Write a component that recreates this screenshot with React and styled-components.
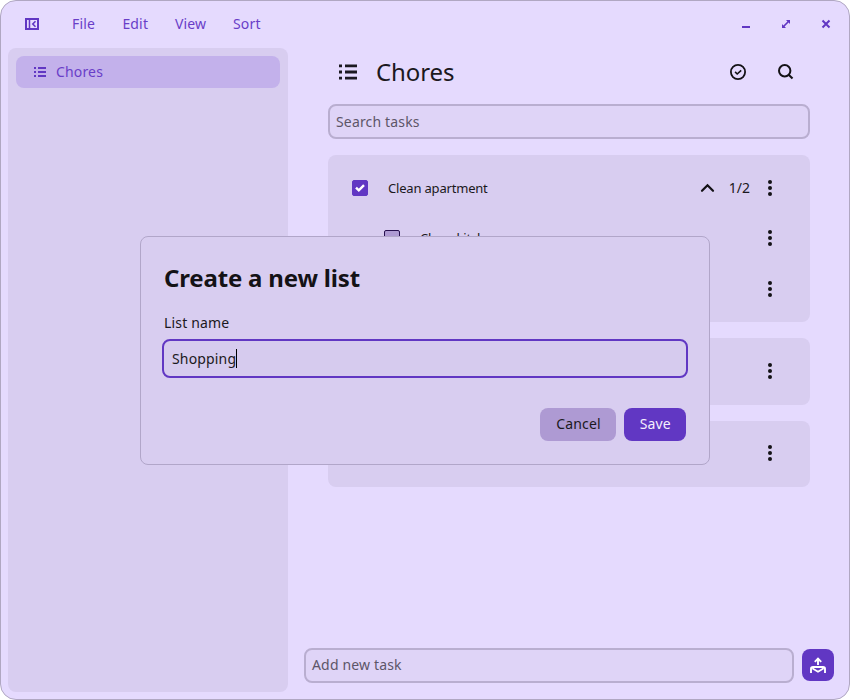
import React from "react";
import styled, { createGlobalStyle } from "styled-components";

const c = {
  bg: "#e5dafe",
  panel: "#d8cdf0",
  field: "#dfd4f7",
  fieldBorder: "#b9aed0",
  active: "#c3b1eb",
  accent: "#6137c3",
  accentText: "#693ec8",
  text: "#1b1820",
  muted: "#5d5668",
  strong: "#141216",
};

const GlobalStyle = createGlobalStyle`
  * { box-sizing: border-box; }
  body { margin: 0; background: #fff; }
  button { font: inherit; letter-spacing: inherit; border: 0; padding: 0; background: none; color: inherit; }
`;

const Window = styled.div`
  position: relative;
  width: 850px;
  height: 700px;
  display: flex;
  flex-direction: column;
  border: 1px solid #b0a7c2;
  border-radius: 16px;
  background: ${c.bg};
  color: ${c.text};
  font-family: "Noto Sans", "Open Sans", sans-serif;
  font-size: 14px;
  line-height: 20px;
  letter-spacing: 0.16px;
  overflow: hidden;
`;

const TitleBar = styled.header`
  height: 47px;
  flex: none;
  display: flex;
  align-items: center;
  padding: 0 11px 1px 23px;
  color: ${c.accentText};
`;

const Menu = styled.nav`
  display: flex;
  flex: 1;
  gap: 27px;
  margin-left: 32px;
`;

const MenuItem = styled.button`
  width: ${(p) => p.$w}px;
  text-align: left;
  white-space: nowrap;
`;

const WindowControls = styled.div`
  display: flex;
  gap: 16px;
`;

const IconButton = styled.button`
  width: ${(p) => p.$size || 24}px;
  height: ${(p) => p.$size || 24}px;
  display: grid;
  place-items: center;
  svg { display: block; }
`;

const Body = styled.div`
  flex: 1;
  min-height: 0;
  display: flex;
  padding: 0 7px 7px;
`;

const Sidebar = styled.aside`
  width: 280px;
  flex: none;
  padding: 8px;
  border-radius: 8px;
  background: ${c.panel};
`;

const SidebarItem = styled.div`
  height: 32px;
  display: flex;
  align-items: center;
  gap: 8px;
  padding: 0 16px;
  border-radius: 8px;
  background: ${c.active};
  color: ${c.accentText};
  svg { display: block; }
`;

const Main = styled.main`
  flex: 1;
  display: flex;
  flex-direction: column;
  padding: 8px 8px 9.5px 16px;
`;

const Content = styled.div`
  flex: 1;
  padding: 0 24px;
`;

const Heading = styled.div`
  height: 32px;
  display: flex;
  align-items: center;
  padding: 0 12px 0 8px;
`;

const ListTitle = styled.h1`
  flex: 1;
  margin: 0 0 0 16px;
  font-size: 24px;
  line-height: 32px;
  font-weight: 400;
  letter-spacing: -0.1px;
`;

const HeadingActions = styled.div`
  display: flex;
  gap: 24px;
  color: ${c.strong};
`;

const Field = styled.div`
  display: flex;
  align-items: center;
  height: 35px;
  padding: 0 6px;
  border: 2px solid ${c.fieldBorder};
  border-radius: 8px;
  background: ${c.field};
  color: ${c.muted};
`;

const SearchField = styled(Field)`
  margin-top: 16.4px;
`;

const Card = styled.section`
  margin-top: 16px;
  padding: 8px 32px 8px 24px;
  border-radius: 8px;
  background: ${c.panel};
`;

const TaskRow = styled.div`
  height: 50.33px;
  display: flex;
  align-items: center;
  padding-left: ${(p) => (p.$nested ? 32 : 0)}px;
  padding-bottom: 1px;
`;

const CheckMark = styled.span`
  width: 16px;
  height: 16px;
  display: grid;
  place-items: center;
  border-radius: 2px;
  border: 1px solid ${(p) => (p.$checked ? c.accent : "#27104f")};
  background: ${(p) => (p.$checked ? c.accent : "#ae9ad3")};
  color: #fff;
`;

const TaskName = styled.span`
  flex: 1;
  margin-left: 20px;
  font-size: 13px;
  letter-spacing: -0.19px;
`;

const Count = styled.span`
  margin: 0 12px 0 13px;
  letter-spacing: 0;
`;

const Composer = styled.div`
  display: flex;
  align-items: center;
  gap: 8px;
`;

const TaskField = styled(Field)`
  flex: 1;
`;

const SendButton = styled.button`
  width: 32px;
  height: 32px;
  display: grid;
  place-items: center;
  border-radius: 8px;
  background: ${c.accent};
  color: #fff;
`;

const Dialog = styled.div`
  position: absolute;
  left: 139px;
  top: 235px;
  width: 570px;
  height: 228.5px;
  padding: 23px 23px 0;
  border: 1px solid #b1a6c9;
  border-radius: 8px;
  background: ${c.panel};
`;

const DialogTitle = styled.h2`
  margin: 2px 0 0;
  font-size: 24px;
  line-height: 32px;
  font-weight: 700;
  letter-spacing: -0.18px;
  color: ${c.strong};
`;

const Label = styled.div`
  margin-top: 19px;
`;

const NameField = styled.div`
  display: flex;
  align-items: center;
  height: 39px;
  margin: 6.4px -2px 0;
  padding: 0 8px;
  border: 2px solid ${c.accent};
  border-radius: 8px;
  background: #d6cbee;
`;

const Caret = styled.span`
  width: 1px;
  height: 19px;
  background: #000;
`;

const DialogActions = styled.div`
  display: flex;
  justify-content: flex-end;
  gap: 8px;
  margin-top: 30px;
`;

const DialogButton = styled.button`
  height: 32.4px;
  width: ${(p) => (p.$primary ? 62.4 : 75.2)}px;
  padding: 0 0 1px 1px;
  border-radius: 8px;
  background: ${(p) => (p.$primary ? c.accent : "#ae9ad3")};
  color: ${(p) => (p.$primary ? "#f4effd" : c.text)};
`;

const ListIcon = () => (
  <svg width="16" height="16" viewBox="0 0 16 16" fill={c.accent}>
    <path d="M2 3h2v2H2zM6 3h8v2H6zM2 7h2v2H2zM6 7h8v2H6zM2 11h2v2H2zM6 11h8v2H6z" />
  </svg>
);

const BigListIcon = () => (
  <svg width="24" height="24" viewBox="0 0 24 24" fill="currentColor">
    <path d="M3 4.4h3v2.8H3zM9 4.4h12v2.8H9zM3 10.6h3v2.8H3zM9 10.6h12v2.8H9zM3 16.8h3v2.8H3zM9 16.8h12v2.8H9z" />
  </svg>
);

const PanelIcon = () => (
  <svg width="16" height="16" viewBox="0 0 16 16" fill="none" stroke={c.accent}>
    <path d="M2 3h12v10H2z" strokeWidth="2" />
    <path d="M5.5 3v10" strokeWidth="1.5" />
    <path d="M11.5 5.3 8.8 8l2.7 2.7" strokeWidth="1.6" />
  </svg>
);

const MoreIcon = () => (
  <svg width="16" height="16" viewBox="0 0 16 16" fill={c.strong}>
    <circle cx="8" cy="2" r="2" />
    <circle cx="8" cy="8" r="2" />
    <circle cx="8" cy="14" r="2" />
  </svg>
);

const MinimizeIcon = () => (
  <svg width="16" height="16" viewBox="0 0 16 16" fill={c.accent}>
    <path d="M4 10h8v2H4z" />
  </svg>
);

const MaximizeIcon = () => (
  <svg width="16" height="16" viewBox="0 0 16 16" fill={c.accent}>
    <path d="M8 4h4v4l-1.4-1.4-4 4L8 12H4V8l1.4 1.4 4-4z" />
  </svg>
);

const CloseIcon = () => (
  <svg width="16" height="16" viewBox="0 0 16 16" fill="none" stroke={c.accent} strokeWidth="2">
    <path d="m4.5 4.5 7 7m0-7-7 7" />
  </svg>
);

const DoneIcon = () => (
  <svg width="16" height="16" viewBox="0 0 16 16" fill="none" stroke="currentColor">
    <circle cx="8" cy="8" r="7.1" strokeWidth="1.8" />
    <path d="m5.1 7.9 2.1 2.1 4-3.7" strokeWidth="1.6" />
  </svg>
);

const SearchIcon = () => (
  <svg width="16" height="16" viewBox="0 0 16 16" fill="none" stroke="currentColor">
    <circle cx="6.7" cy="6.7" r="5.7" strokeWidth="2" />
    <path d="m10.7 10.7 3.8 3.8" strokeWidth="2.1" />
  </svg>
);

const ChevronUp = () => (
  <svg width="16" height="16" viewBox="0 0 16 16" fill="none" stroke={c.strong} strokeWidth="2.2" strokeLinecap="round">
    <path d="M2 10.8 7.5 5.2l5.5 5.6" />
  </svg>
);

const Tick = () => (
  <svg width="12" height="12" viewBox="0 0 12 12" fill="none" stroke="currentColor" strokeWidth="2.4">
    <path d="m2 5.6 2.8 2.8L10 3.2" />
  </svg>
);

const SendIcon = () => (
  <svg width="16" height="16" viewBox="0 0 16 16" fill="none" stroke="currentColor" strokeWidth="2">
    <path d="M8 8V2M4.8 4.8 8 1.5l3.2 3.3" strokeWidth="1.9" />
    <path d="M1 16v-4.2Q1 10 3 10h10q2 0 2 1.8V16" strokeWidth="1.9" />
    <path d="M3 10.5v1.2L8 14.8l5-3.1v-1.2" strokeWidth="1.7" />
  </svg>
);

const Task = ({ name, checked, nested, count }) => (
  <TaskRow $nested={nested}>
    <CheckMark $checked={checked}>{checked && <Tick />}</CheckMark>
    <TaskName>{name}</TaskName>
    {count && (
      <>
        <ChevronUp />
        <Count>{count}</Count>
      </>
    )}
    <IconButton $size={16}>
      <MoreIcon />
    </IconButton>
  </TaskRow>
);

const menus = [
  { label: "File", w: 23.4 },
  { label: "Edit", w: 25.6 },
  { label: "View", w: 31 },
  { label: "Sort", w: 28 },
];

export default function App() {
  return (
    <>
      <GlobalStyle />
      <Window>
        <TitleBar>
          <IconButton $size={16}>
            <PanelIcon />
          </IconButton>
          <Menu>
            {menus.map((m) => (
              <MenuItem key={m.label} $w={m.w}>
                {m.label}
              </MenuItem>
            ))}
          </Menu>
          <WindowControls>
            <IconButton><MinimizeIcon /></IconButton>
            <IconButton><MaximizeIcon /></IconButton>
            <IconButton><CloseIcon /></IconButton>
          </WindowControls>
        </TitleBar>
        <Body>
          <Sidebar>
            <SidebarItem>
              <ListIcon />
              Chores
            </SidebarItem>
          </Sidebar>
          <Main>
            <Content>
              <Heading>
                <BigListIcon />
                <ListTitle>Chores</ListTitle>
                <HeadingActions>
                  <IconButton><DoneIcon /></IconButton>
                  <IconButton><SearchIcon /></IconButton>
                </HeadingActions>
              </Heading>
              <SearchField>Search tasks</SearchField>
              <Card>
                <Task name="Clean apartment" checked count="1/2" />
                <Task name="Clean kitchen" nested />
                <Task name="" nested />
              </Card>
              <Card>
                <Task name="" />
              </Card>
              <Card>
                <Task name="" />
              </Card>
            </Content>
            <Composer>
              <TaskField>Add new task</TaskField>
              <SendButton><SendIcon /></SendButton>
            </Composer>
          </Main>
        </Body>
        <Dialog>
          <DialogTitle>Create a new list</DialogTitle>
          <Label>List name</Label>
          <NameField>
            Shopping
            <Caret />
          </NameField>
          <DialogActions>
            <DialogButton>Cancel</DialogButton>
            <DialogButton $primary>Save</DialogButton>
          </DialogActions>
        </Dialog>
      </Window>
    </>
  );
}
